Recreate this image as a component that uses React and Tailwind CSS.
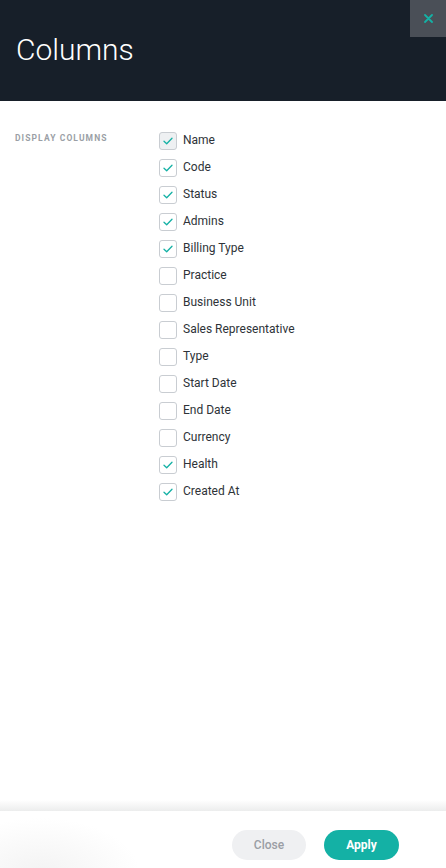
import React from "react";

const items = [
  ["Name", true],
  ["Code", true],
  ["Status", true],
  ["Admins", true],
  ["Billing Type", true],
  ["Practice", false],
  ["Business Unit", false],
  ["Sales Representative", false],
  ["Type", false],
  ["Start Date", false],
  ["End Date", false],
  ["Currency", false],
  ["Health", true],
  ["Created At", true],
];

function Check({ on, first }) {
  return (
    <div
      className={`w-[18px] h-[18px] rounded-[3px] border border-[#c9cdd2] flex items-center justify-center ${first ? "bg-[#eef0f2]" : "bg-white"}`}
    >
      {on && (
        <svg width="10" height="8" viewBox="0 0 10 8" fill="none">
          <path d="M1 4.2L3.7 6.8L9 1.3" stroke="#14b1a5" strokeWidth="1.3" strokeLinecap="round" strokeLinejoin="round" />
        </svg>
      )}
    </div>
  );
}

export default function App() {
  return (
    <div
      className="w-[446px] h-[868px] flex flex-col bg-white overflow-hidden relative"
      style={{ fontFamily: "Roboto, 'Liberation Sans', sans-serif" }}
    >
      <div className="h-[101px] bg-[#171f29] relative shrink-0">
        <div className="pl-[16px] pt-[30px] text-[30px] font-light text-white leading-[40px]">Columns</div>
        <button className="absolute right-0 top-0 w-[36px] h-[37px] bg-[#4a4f57] flex items-center justify-center">
          <svg width="9" height="9" viewBox="0 0 9 9">
            <path d="M1 1L8 8M8 1L1 8" stroke="#14b1a5" strokeWidth="1.8" strokeLinecap="round" />
          </svg>
        </button>
      </div>
      <div className="flex-1 flex pt-[26px]">
        <div className="w-[159px] pl-[15px] pt-[5px] text-[8.5px] font-bold tracking-[1.1px] text-[#9b9fa6] leading-[12px]">
          DISPLAY COLUMNS
        </div>
        <div className="flex flex-col">
          {items.map(([label, on], i) => (
            <div key={label} className="h-[27px] flex items-center gap-[6px]">
              <Check on={on} first={i === 0} />
              <span className="text-[12px] leading-[14px] pb-[1px] text-[#2e3338]">{label}</span>
            </div>
          ))}
        </div>
      </div>
      <div className="h-[11px] bg-gradient-to-b from-white to-[#eceded] shrink-0" />
      <div className="h-[57px] shrink-0 flex justify-end items-start pt-[19px] pr-[47px] gap-[18px] relative">
        <div className="absolute left-[-60px] bottom-[-60px] w-[200px] h-[110px] rounded-full bg-[radial-gradient(closest-side,#f3f3f3,transparent)]" />
        <button className="w-[74px] h-[30px] rounded-full bg-[#eff0f2] text-[12px] font-medium text-[#9a9ea5]">Close</button>
        <button className="w-[75px] h-[30px] rounded-full bg-[#14b1a5] text-[12px] font-bold text-white">Apply</button>
      </div>
    </div>
  );
}
